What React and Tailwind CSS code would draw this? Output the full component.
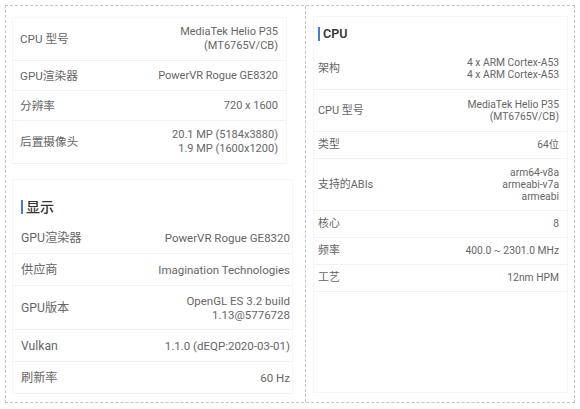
import React from "react";

const font = { fontFamily: "Roboto, 'Noto Sans CJK SC', sans-serif" };

const topRows = [
  ["CPU 型号", ["MediaTek Helio P35", "(MT6765V/CB)"]],
  ["GPU渲染器", ["PowerVR Rogue GE8320"]],
  ["分辨率", ["720 x 1600"]],
  ["后置摄像头", ["20.1 MP (5184x3880)", "1.9 MP (1600x1200)"]],
];

const displayRows = [
  ["GPU渲染器", ["PowerVR Rogue GE8320"]],
  ["供应商", ["Imagination Technologies"]],
  ["GPU版本", ["OpenGL ES 3.2 build", "1.13@5776728"]],
  ["Vulkan", ["1.1.0 (dEQP:2020-03-01)"]],
  ["刷新率", ["60 Hz"]],
];

const cpuRows = [
  ["架构", ["4 x ARM Cortex-A53", "4 x ARM Cortex-A53"]],
  ["CPU 型号", ["MediaTek Helio P35", "(MT6765V/CB)"]],
  ["类型", ["64位"]],
  ["支持的ABIs", ["arm64-v8a", "armeabi-v7a", "armeabi"]],
  ["核心", ["8"]],
  ["频率", ["400.0 ~ 2301.0 MHz"]],
  ["工艺", ["12nm HPM"]],
];

function Row({ label, values, className }) {
  return (
    <div className={`flex items-center justify-between border-b border-[#f2f2f2] ${className}`}>
      <span className="text-[1.06em]">{label}</span>
      <div className="text-right">
        {values.map((v) => (
          <div key={v}>{v}</div>
        ))}
      </div>
    </div>
  );
}

function Header({ title, className }) {
  return (
    <div className={`flex items-center text-[#333] ${className}`}>
      <span className="w-[2px] h-[14px] bg-[#3f7fd8] mr-[3px]" />
      {title}
    </div>
  );
}

export default function App() {
  return (
    <div className="w-[580px] h-[409px] bg-white p-[5px]" style={font}>
      <div className="flex h-[398px] border border-dashed border-[#c4c4c4]">
        {/* left column */}
        <div className="w-[300px] border-r border-dashed border-[#c4c4c4] pl-[6px] pt-[11px]">
          <div className="w-[275px] border border-b-0 border-[#f6f6f6] text-[11px] leading-[14px] text-[#666]">
            {topRows.map(([l, v]) => (
              <Row
                key={l}
                label={l}
                values={v}
                className={`pl-[7px] pr-[8px] ${v.length > 1 ? "h-[43px]" : "h-[30px]"}`}
              />
            ))}
          </div>

          <div className="mt-[15px] w-[281px] h-[214px] border border-[#f6f6f6] border-b-0">
            <Header title="显示" className="text-[14px] h-[20px] mt-[17px] pl-[8px] font-medium" />
            <div className="mt-[5px] text-[11.5px] leading-[14px] text-[#666]">
              {displayRows.map(([l, v]) => (
                <Row
                  key={l}
                  label={l}
                  values={v}
                  className={`pl-[8px] pr-[2px] ${v.length > 1 ? "h-[44px]" : "h-[32px]"}`}
                />
              ))}
            </div>
          </div>
        </div>

        {/* right column */}
        <div className="flex-1 pl-[7px] pr-[6px] pt-[10px] pb-[9px]">
          <div className="h-full border border-[#f6f6f6]">
            <Header title="CPU" className="text-[12.5px] h-[14px] mt-[10px] pl-[4px] font-semibold" />
            <div className="mt-[7px] text-[10.3px] leading-[12px] text-[#666]">
              {cpuRows.map(([l, v]) => (
                <Row
                  key={l}
                  label={l}
                  values={v}
                  className={`pl-[4px] pr-[8px] ${
                    v.length === 3 ? "h-[52px]" : v.length === 2 ? "h-[42px]" : "h-[27px]"
                  }`}
                />
              ))}
            </div>
          </div>
        </div>
      </div>
    </div>
  );
}
